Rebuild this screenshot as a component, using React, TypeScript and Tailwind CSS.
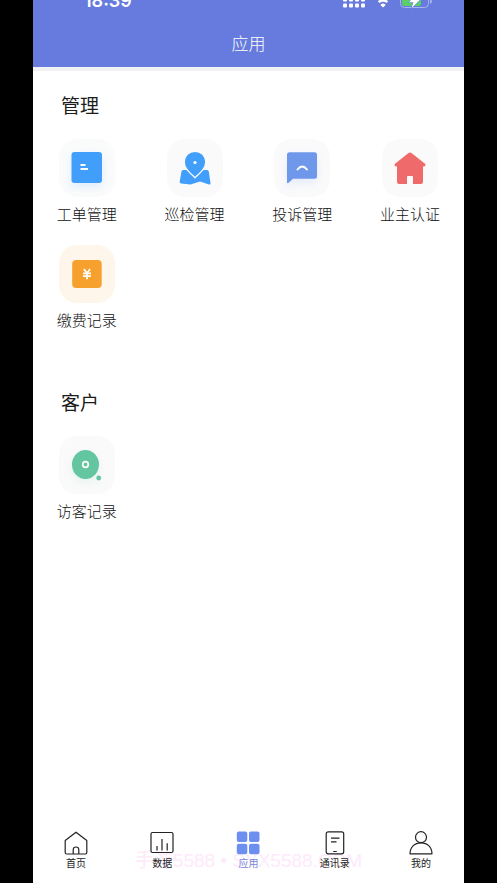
import type { ReactNode } from 'react'

interface AppItem {
  icon: ReactNode
  label: string
  tile: string
}

interface TabItem {
  active?: boolean
  icon: ReactNode
  label: string
}

const managementItems: AppItem[] = [
  { icon: <WorkOrderIcon />, label: '工单管理', tile: 'bg-[#fafbfb]' },
  { icon: <PatrolIcon />, label: '巡检管理', tile: 'bg-[#fafafa]' },
  { icon: <ComplaintIcon />, label: '投诉管理', tile: 'bg-[#fafafb]' },
  { icon: <OwnerIcon />, label: '业主认证', tile: 'bg-[#fafafa]' },
  { icon: <PaymentIcon />, label: '缴费记录', tile: 'bg-[#fef6ea]' },
]

const customerItems: AppItem[] = [{ icon: <VisitorIcon />, label: '访客记录', tile: 'bg-[#fafafa]' }]

const tabs: TabItem[] = [
  { icon: <HomeTabIcon />, label: '首页' },
  { icon: <DataTabIcon />, label: '数据' },
  { active: true, icon: <AppsTabIcon />, label: '应用' },
  { icon: <ContactsTabIcon />, label: '通讯录' },
  { icon: <ProfileTabIcon />, label: '我的' },
]

export default function App() {
  return (
    <div className="min-h-screen bg-black px-[33px] font-['Noto_Sans_CJK_SC',sans-serif]">
      <div className="relative flex min-h-screen flex-col overflow-hidden bg-white">
        <Header />
        <main className="flex-1">
          <AppSection items={managementItems} title="管理" />
          <AppSection className="mt-[37px]" items={customerItems} title="客户" />
        </main>
        <p className="pointer-events-none absolute inset-x-0 bottom-2 text-center font-['Liberation_Sans','Noto_Sans_CJK_SC',sans-serif] text-[19px] leading-7 whitespace-nowrap text-[#fdeafa]">
          手游5588 • SYX5588.COM
        </p>
        <TabBar />
      </div>
    </div>
  )
}

function Header() {
  return (
    <header className="border-b-4 border-[#f1f1f3] bg-[#667bdd] text-white">
      <div className="-mt-[9px] flex h-5 items-center justify-between pr-8 pl-[51px]">
        <span className="font-[Inter,sans-serif] text-lg leading-5 font-semibold">18:39</span>
        <div className="flex items-center gap-[9px]">
          <SignalIcon />
          <WifiIcon />
          <BatteryIcon />
        </div>
      </div>
      <h1 className="mt-2 flex h-12 items-center justify-center text-[17px] font-light">应用</h1>
    </header>
  )
}

function AppSection({ className = '', items, title }: { className?: string; items: AppItem[]; title: string }) {
  return (
    <section className={className}>
      <h2 className="px-7 pt-5 text-[19px] leading-7 text-[#1c1c1c]">{title}</h2>
      <div className="mt-5 grid grid-cols-4 gap-y-5">
        {items.map((item) => (
          <button className="flex flex-col items-center" key={item.label} type="button">
            <span className={`flex h-[58px] w-14 items-center justify-center rounded-[18px] ${item.tile}`}>
              {item.icon}
            </span>
            <span className="mt-1.5 text-[15px] leading-[22px] font-light text-[#111]">{item.label}</span>
          </button>
        ))}
      </div>
    </section>
  )
}

function TabBar() {
  return (
    <nav className="relative grid grid-cols-5 pb-3">
      {tabs.map((tab) => (
        <a
          aria-current={tab.active ? 'page' : undefined}
          className={`flex flex-col items-center ${tab.active ? 'text-[#7b87d8]' : 'text-[#222]'}`}
          href="#"
          key={tab.label}
        >
          {tab.icon}
          <span className="text-[10px] leading-4">{tab.label}</span>
        </a>
      ))}
    </nav>
  )
}

function SignalIcon() {
  return (
    <svg className="h-4 w-6" fill="currentColor" viewBox="0 0 24 16">
      {[1, 7, 13, 19].map((x) => (
        <g key={x}>
          <rect height="4" rx="1" width="4" x={x} y="4.500" />
          <rect height="4" rx="1" width="4" x={x} y="10.500" />
        </g>
      ))}
    </svg>
  )
}

function WifiIcon() {
  return (
    <svg className="h-4 w-4" fill="none" stroke="currentColor" strokeWidth="2.4" viewBox="0 0 16 16">
      <path d="M1 6a10 10 0 0 1 14 0M3.700 9.200a6.200 6.200 0 0 1 8.600 0" />
      <path d="M8 14.500 5.300 11.900a3.900 3.900 0 0 1 5.400 0z" fill="currentColor" stroke="none" />
    </svg>
  )
}

function BatteryIcon() {
  return (
    <svg className="h-4 w-8" viewBox="0 0 32 16">
      <rect fill="none" height="13" rx="4" stroke="#a9b4eb" width="28" x="0.500" y="1.500" />
      <path d="M30 6v5q2-1 2-2.500T30 6" fill="#a9b4eb" />
      <rect fill="#58cf68" height="10" rx="2.500" width="19" x="2" y="3" />
      <path d="M16.500 0 8.500 9.500H13L11 16l9.500-9.500h-5z" fill="#fff" stroke="#667bdd" strokeWidth="0.600" />
    </svg>
  )
}

function WorkOrderIcon() {
  return (
    <svg className="size-8 drop-shadow-[0_4px_4px_#409eff26]" viewBox="0 0 32 32">
      <rect fill="#429efb" height="31" rx="3" width="30.500" x="0.500" y="0" />
      <path d="M9.500 13h5M9.500 17h7.500" stroke="#fff" strokeWidth="2" />
    </svg>
  )
}

function PatrolIcon() {
  return (
    <svg className="h-[34px] w-8" viewBox="0 0 32 34">
      <path
        d="M4 19h24q1.500 0 1.800 1.500L31.500 32q.1 2-1.600 1.500L21 30.500l-9.500 3L2 32.500Q.4 32.200.7 30.500l1.800-10Q2.800 19 4 19z"
        fill="#429efb"
      />
      <path
        d="M16 .2C9.800.2 5.200 4.800 5.200 11c0 6.500 5.800 11 10.800 15.700C21 22 26.800 17.500 26.800 11 26.800 4.800 22.200.2 16 .2z"
        fill="#429efb"
        stroke="#fafafa"
        strokeWidth="1.400"
      />
      <circle cx="16" cy="11.500" fill="#fff" r="1.600" />
    </svg>
  )
}

function ComplaintIcon() {
  return (
    <svg className="size-8 drop-shadow-[0_4px_4px_#6f98eb26]" viewBox="0 0 32 32">
      <path d="M3.500.3h25q2.500 0 2.500 2.500v21.500q0 2.500-2.500 2.500H7l-4.300 4Q1 32 1 30V2.800Q1 .3 3.500.3z" fill="#6f98eb" />
      <path d="M11.500 17.500q4.700-6 9.500 0" fill="none" stroke="#fff" strokeLinecap="round" strokeWidth="1.900" />
    </svg>
  )
}

function OwnerIcon() {
  return (
    <svg className="size-8" viewBox="0 0 32 32">
      <path
        d="M14.200 1.200q1.800-1.400 3.600 0L31 11.800q1.500 2.700-1.500 2.700H29V30q0 2-2 2h-8v-7q0-1-1-1h-4q-1 0-1 1v7H5q-2 0-2-2V14.500h-.5q-3 0-1.500-2.700z"
        fill="#ef6b6b"
      />
    </svg>
  )
}

function PaymentIcon() {
  return (
    <svg className="size-8" viewBox="0 0 32 32">
      <rect fill="#f6a12e" height="28" rx="4" width="29.500" x="1.200" y="2" />
      <path
        d="m12.800 11 3.200 4 3.200-4M16 15v6.200M12 15.300h8M12 18.200h8"
        fill="none"
        stroke="#fff"
        strokeWidth="1.700"
      />
    </svg>
  )
}

function VisitorIcon() {
  return (
    <svg className="size-8 drop-shadow-[0_4px_4px_#64c7a020]" viewBox="0 0 32 32">
      <ellipse cx="14.500" cy="15.500" fill="#63c6a1" rx="13.500" ry="14.500" />
      <circle cx="14.500" cy="15.500" fill="none" r="2.800" stroke="#fff" strokeWidth="1.700" />
      <circle cx="27.700" cy="29" fill="#63c6a1" r="2.400" />
    </svg>
  )
}

function HomeTabIcon() {
  return (
    <svg className="size-6" fill="none" stroke="currentColor" strokeLinejoin="round" strokeWidth="1.200" viewBox="0 0 24 24">
      <path d="M1.200 9.500 12 1.200l10.800 8.300v12q0 1.500-1.500 1.500H2.700q-1.500 0-1.500-1.500z" />
      <path d="M9.200 23v-4.200a2.800 2.800 0 0 1 5.600 0V23" />
    </svg>
  )
}

function DataTabIcon() {
  return (
    <svg className="size-6" fill="none" stroke="currentColor" strokeWidth="1.200" viewBox="0 0 24 24">
      <rect height="20" rx="1.500" width="22" x="1" y="1.500" />
      <path d="M7 19.500V15M12 19.500V8M17.200 19.500v-7.300" />
    </svg>
  )
}

function AppsTabIcon() {
  return (
    <svg className="size-6" fill="#6c8ff0" viewBox="0 0 24 24">
      <rect height="10.500" rx="2" width="10.500" x="0.800" y="0.500" />
      <rect height="10.500" rx="2" width="10.500" x="13" y="0.500" />
      <rect height="10.500" rx="2" width="10.500" x="0.800" y="12.800" />
      <rect height="10.500" rx="2" width="10.500" x="13" y="12.800" />
    </svg>
  )
}

function ContactsTabIcon() {
  return (
    <svg className="size-6" fill="none" stroke="currentColor" strokeWidth="1.200" viewBox="0 0 24 24">
      <rect height="22" rx="2" width="17.500" x="3.200" y="0.800" />
      <path d="M8 7.200h8.500M8 10.800h5.500M10.200 20.500h3.600" />
    </svg>
  )
}

function ProfileTabIcon() {
  return (
    <svg className="size-6" fill="none" stroke="currentColor" strokeLinejoin="round" strokeWidth="1.200" viewBox="0 0 24 24">
      <circle cx="12" cy="6.200" r="5.500" />
      <path d="M1 22.800c0-6.500 4.500-11 11-11s11 4.500 11 11z" />
    </svg>
  )
}
